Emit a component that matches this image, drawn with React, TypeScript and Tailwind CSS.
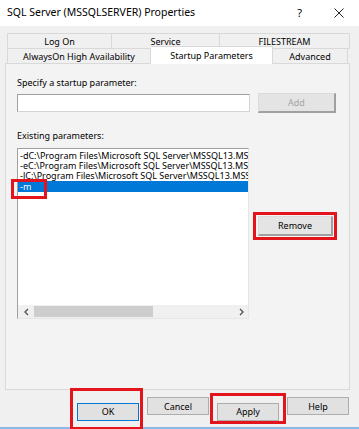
import React from "react";

const listRows = [
  "-dC:\\Program Files\\Microsoft SQL Server\\MSSQL13.MSSQLSERVER\\MSSQL\\DATA\\master.mdf",
  "-eC:\\Program Files\\Microsoft SQL Server\\MSSQL13.MSSQLSERVER\\MSSQL\\Log\\ERRORLOG",
  "-lC:\\Program Files\\Microsoft SQL Server\\MSSQL13.MSSQLSERVER\\MSSQL\\DATA\\mastlog.ldf",
];

const RedBox: React.FC<{ className: string }> = ({ className }) => (
  <span className={`pointer-events-none absolute border-[3px] border-[#e3141c] ${className}`} />
);

const DialogButton: React.FC<{ label: string; focused?: boolean }> = ({ label, focused }) => (
  <button
    className={`h-[18px] w-[62px] text-[9px] leading-none bg-[#e1e1e1] border ${
      focused ? "border-[#0078d7]" : "border-[#adadad]"
    }`}
  >
    {label}
  </button>
);

export default function App() {
  return (
    <div
      className="w-[359px] h-[429px] bg-[#f0f0f0] flex flex-col overflow-hidden text-black"
      style={{ fontFamily: '"Noto Sans", "Open Sans", sans-serif' }}
    >
      {/* title bar */}
      <div className="h-[26px] bg-white flex items-center pl-[7px] pr-[15px] shrink-0">
        <span className="text-[10.5px]">SQL Server (MSSQLSERVER) Properties</span>
        <span className="ml-auto text-[11px]">?</span>
        <svg className="ml-[32px]" width="10" height="10" viewBox="0 0 10 10">
          <path d="M0.5 0.5 L9.5 9.5 M9.5 0.5 L0.5 9.5" stroke="#222" strokeWidth="1" fill="none" />
        </svg>
      </div>

      <div className="pt-[7px] pl-[5px]">
        {/* tabs */}
        <div className="pl-[2px] text-[9px] leading-none">
          <div className="flex h-[16px]">
            <div className="w-[105px] border border-[#d9d9d9] flex items-center justify-center">Log On</div>
            <div className="w-[108px] border border-l-0 border-[#d9d9d9] flex items-center justify-center">Service</div>
            <div className="w-[130px] border border-l-0 border-[#d9d9d9] flex items-center justify-center">FILESTREAM</div>
          </div>
          <div className="flex h-[16px] -mt-px">
            <div className="w-[144px] border border-[#d9d9d9] flex items-center justify-center">
              AlwaysOn High Availability
            </div>
            <div className="relative z-10 w-[122px] h-[18px] -mt-[2px] bg-white border border-b-0 border-l-0 border-[#d9d9d9] flex items-center justify-center">
              Startup Parameters
            </div>
            <div className="w-[75px] border border-l-0 border-[#d9d9d9] flex items-center justify-center">Advanced</div>
          </div>
        </div>

        {/* panel */}
        <div className="w-[345px] h-[327px] -mt-px bg-[#f3f3f3] border border-[#d9d9d9] pl-[11px] pt-[13px] text-[9px]">
          <div className="leading-[11px]">Specify a startup parameter:</div>
          <div className="flex items-center mt-[5px]">
            <div className="w-[233px] h-[18px] bg-white border border-[#a0a0a0] border-b-[#d4d4d4] border-r-[#d4d4d4]" />
            <button className="ml-[8px] w-[78px] h-[20px] bg-[#e4e4e4] border border-[#dcdcdc] border-b-2 border-r-2 border-b-[#a0a0a0] border-r-[#a0a0a0] text-[#a3a3a3] leading-none">
              Add
            </button>
          </div>

          <div className="leading-[11px] mt-[17px]">Existing parameters:</div>

          <div className="flex items-start mt-[7px]">
            <div className="relative w-[232px] h-[171px]">
              <div className="w-full h-full bg-white border border-[#a0a0a0] border-b-[#e6e6e6] border-r-[#e6e6e6] flex flex-col overflow-hidden">
                <div className="pt-[2px] flex-1 overflow-hidden">
                  {listRows.map((r) => (
                    <div key={r} className="h-[10px] leading-[10px] pl-[2px] whitespace-nowrap overflow-hidden text-[9px]">
                      {r}
                    </div>
                  ))}
                  <div className="h-[11px] leading-[11px] pl-[2px] bg-[#0078d7] text-white text-[9px]">-m</div>
                </div>
                <div className="h-[13px] flex items-stretch bg-[#f0f0f0]">
                  <div className="w-[16px] flex items-center justify-center">
                    <svg width="5" height="8" viewBox="0 0 5 8">
                      <path d="M4 1 L1 4 L4 7" stroke="#505050" strokeWidth="1.3" fill="none" />
                    </svg>
                  </div>
                  <div className="w-[119px] my-[1px] bg-[#cdcdcd]" />
                  <div className="flex-1" />
                  <div className="w-[14px] flex items-center justify-center">
                    <svg width="5" height="8" viewBox="0 0 5 8">
                      <path d="M1 1 L4 4 L1 7" stroke="#505050" strokeWidth="1.3" fill="none" />
                    </svg>
                  </div>
                </div>
              </div>
              <RedBox className="left-[-6px] top-[31px] w-[36px] h-[20px]" />
            </div>

            <div className="relative ml-[9px] mt-[68px]">
              <button className="w-[75px] h-[20px] bg-[#e4e4e4] border border-[#dcdcdc] border-b-2 border-r-2 border-b-[#a0a0a0] border-r-[#a0a0a0] leading-none">
                Remove
              </button>
              <RedBox className="-left-[5px] -right-[4px] -top-[4px] -bottom-[4px]" />
            </div>
          </div>
        </div>
      </div>

      {/* buttons */}
      <div className="flex gap-[8px] pl-[77px] mt-[7px]">
        <div className="relative">
          <DialogButton label="OK" focused />
          <RedBox className="-left-[7px] -right-[4px] -top-[9px] -bottom-[9px]" />
        </div>
        <DialogButton label="Cancel" />
        <div className="relative">
          <DialogButton label="Apply" />
          <RedBox className="-left-[7px] -right-[7px] -top-[4px] -bottom-[3px]" />
        </div>
        <DialogButton label="Help" />
      </div>

      <div className="mt-auto h-[2px] bg-[#8cb8e2]" />
    </div>
  );
}
